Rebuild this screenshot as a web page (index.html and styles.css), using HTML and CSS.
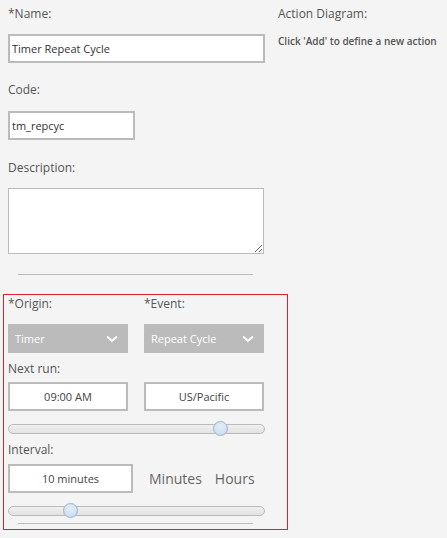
FILE: index.html
```html
<!DOCTYPE html>
<html>
<head>
<meta charset="utf-8">
<link rel="stylesheet" href="styles.css">
</head>
<body>
<div class="page">
  <div class="left">
    <div class="field-wrap">
      <div class="label first">*Name:</div>
      <input class="input name" type="text" value="Timer Repeat Cycle">
      <div class="label code-label">Code:</div>
      <input class="input code" type="text" value="tm_repcyc">
      <div class="label desc-label">Description:</div>
      <textarea class="desc"></textarea>
      <div class="rule"></div>
    </div>
    <div class="box">
      <div class="pair">
        <div class="label">*Origin:</div>
        <div class="label">*Event:</div>
      </div>
      <div class="pair selects">
        <div class="select"><span>Timer</span><svg width="12" height="8" viewBox="0 0 12 8"><polyline points="1,1.5 6,6 11,1.5" fill="none" stroke="#fff" stroke-width="2"/></svg></div>
        <div class="select"><span>Repeat Cycle</span><svg width="12" height="8" viewBox="0 0 12 8"><polyline points="1,1.5 6,6 11,1.5" fill="none" stroke="#fff" stroke-width="2"/></svg></div>
      </div>
      <div class="label next-label">Next run:</div>
      <div class="pair inputs">
        <div class="box-input">09:00 AM</div>
        <div class="box-input">US/Pacific</div>
      </div>
      <div class="slider s1"><div class="thumb" style="left:204px"></div></div>
      <div class="label interval-label">Interval:</div>
      <div class="interval-row">
        <div class="box-input interval">10 minutes</div>
        <span class="unit">Minutes</span>
        <span class="unit">Hours</span>
      </div>
      <div class="slider s2"><div class="thumb" style="left:54px"></div></div>
      <div class="rule bottom"></div>
    </div>
  </div>
  <div class="right">
    <div class="label first">Action Diagram:</div>
    <div class="hint">Click 'Add' to define a new action</div>
  </div>
</div>
</body>
</html>
```
FILE: styles.css
```css
html, body {
  margin: 0;
  padding: 0;
  background: #f4f4f4;
  font-family: "Open Sans", "DejaVu Sans", sans-serif;
  color: #555;
}
.page {
  display: flex;
  align-items: flex-start;
}
.left {
  margin-left: 3px;
  width: 275px;
  flex: none;
}
.field-wrap {
  padding-left: 5px;
}
.label {
  font-size: 12px;
  line-height: 18px;
  height: 18px;
  color: #555;
}
.label.first {
  margin-top: 5px;
}
.input {
  display: block;
  box-sizing: border-box;
  height: 29px;
  border: 2px solid #bbb;
  background: #fff;
  font-family: "Open Sans", sans-serif;
  font-size: 11px;
  color: #333;
  padding: 0 2px;
  margin: 0;
  outline: none;
}
.name {
  margin-top: 11px;
  width: 257px;
}
.code-label { margin-top: 18px; }
.code {
  margin-top: 12px;
  width: 127px;
}
.desc-label { margin-top: 19px; }
.desc {
  display: block;
  box-sizing: border-box;
  margin: 11px 0 0 0;
  width: 256px;
  height: 66px;
  border: 1px solid #bbb;
  background: #fff;
  resize: both;
  outline: none;
}
.rule {
  margin-top: 20px;
  margin-left: 10px;
  width: 235px;
  height: 1px;
  background: #bbb;
}
.box {
  margin-top: 19px;
  width: 285px;
  box-sizing: border-box;
  border: 1px solid #e0202a;
  padding: 0 0 5px 4px;
}
.pair {
  display: grid;
  grid-template-columns: 120px 120px;
  column-gap: 16px;
}
.selects { margin-top: 11px; }
.select {
  box-sizing: border-box;
  height: 29px;
  background: #bbb;
  color: #fff;
  font-size: 11px;
  display: flex;
  align-items: center;
  justify-content: space-between;
  padding: 0 10px 0 7px;
}
.select svg { display: block; }
.next-label { margin-top: 7px; }
.inputs { margin-top: 4px; }
.box-input {
  box-sizing: border-box;
  height: 29px;
  border: 2px solid #bbb;
  background: #fff;
  color: #444;
  font-size: 11px;
  display: flex;
  align-items: center;
  justify-content: center;
}
.slider {
  position: relative;
  box-sizing: border-box;
  width: 257px;
  height: 10px;
  border: 1px solid #bbb;
  border-radius: 5px;
  background: linear-gradient(#f0f0f0, #e2e2e2);
}
.s1 { margin-top: 13px; }
.s2 { margin-top: 13px; }
.thumb {
  position: absolute;
  top: -4px;
  width: 15px;
  height: 15px;
  box-sizing: border-box;
  border-radius: 50%;
  border: 1px solid #9fb3c8;
  background: radial-gradient(circle at 50% 35%, #e4eefa, #c7d9ee);
}
.interval-label { margin-top: 7px; }
.interval-row {
  margin-top: 5px;
  display: flex;
  align-items: center;
}
.interval { width: 125px; }
.unit {
  font-size: 14px;
  color: #666;
  margin-left: 16px;
}
.unit + .unit { margin-left: 13px; }
.rule.bottom {
  margin-top: 7px;
}
.hint {
  margin-top: 10px;
  font-size: 10px;
  font-weight: 600;
  color: #555;
  line-height: 16px;
  white-space: nowrap;
}
```
